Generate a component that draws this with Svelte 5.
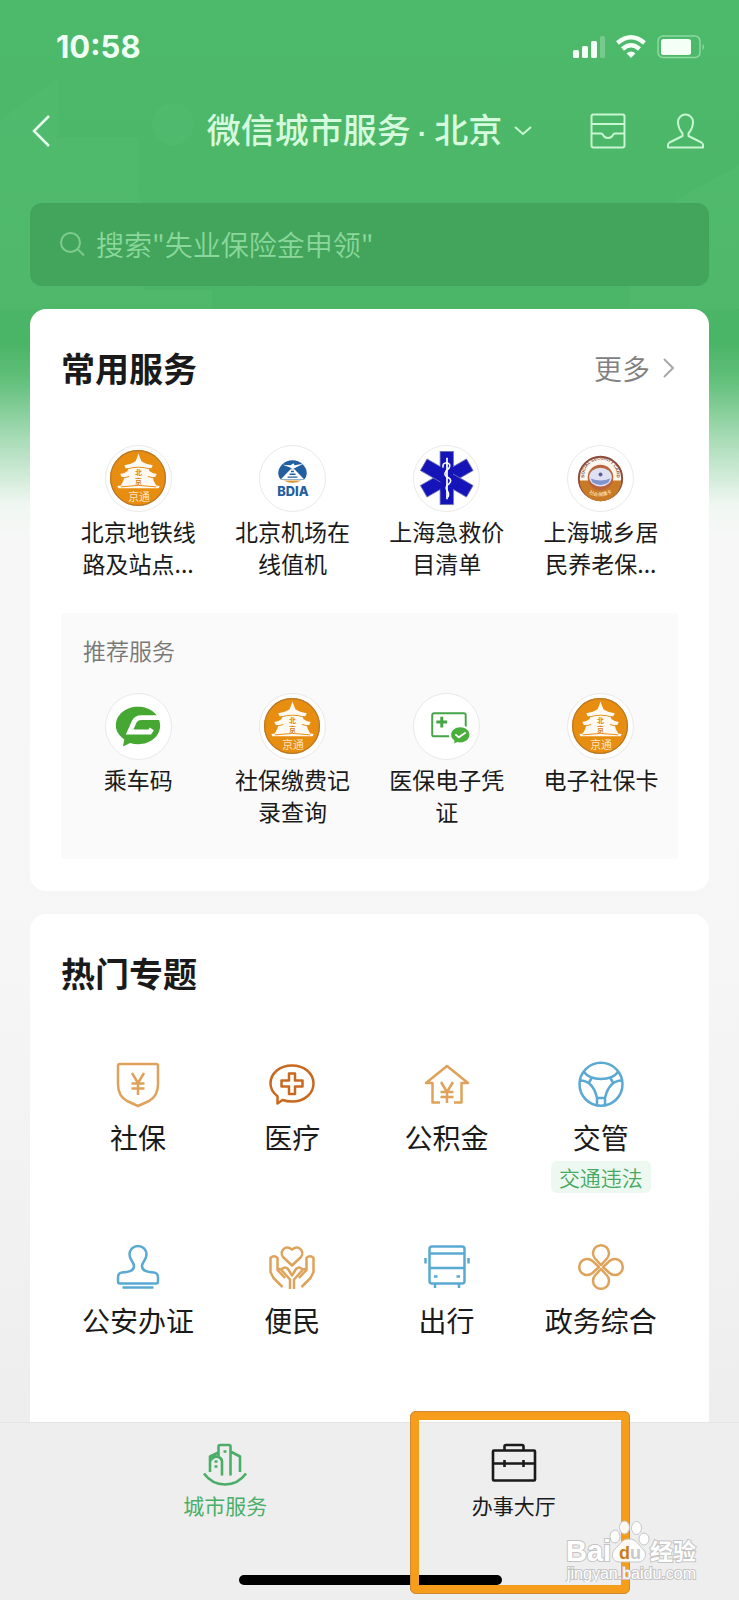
<script lang="ts">
  type Service = { name: string; icon: string };
  type Topic = { name: string; icon: string; tone: string; tag?: string };

  const common: Service[] = [
    { name: "北京地铁线路及站点...", icon: "pagoda" },
    { name: "北京机场在线值机", icon: "bdia" },
    { name: "上海急救价目清单", icon: "star" },
    { name: "上海城乡居民养老保...", icon: "card" },
  ];

  const recommended: Service[] = [
    { name: "乘车码", icon: "ride" },
    { name: "社保缴费记录查询", icon: "pagoda" },
    { name: "医保电子凭证", icon: "insurance" },
    { name: "电子社保卡", icon: "pagoda" },
  ];

  const topics: Topic[] = [
    { name: "社保", icon: "shield", tone: "gold" },
    { name: "医疗", icon: "medical", tone: "rust" },
    { name: "公积金", icon: "house", tone: "gold" },
    { name: "交管", icon: "wheel", tone: "blue", tag: "交通违法" },
    { name: "公安办证", icon: "stamp", tone: "blue" },
    { name: "便民", icon: "hands", tone: "gold" },
    { name: "出行", icon: "bus", tone: "blue" },
    { name: "政务综合", icon: "clover", tone: "gold" },
  ];

  let query = $state("");
</script>

{#snippet serviceIcon(icon: string)}
  <svg class="service-svg" viewBox="0 0 66 66" aria-hidden="true">
    {#if icon === "pagoda"}
      <circle cx="32.500" cy="32.500" r="28.5" fill="#e78d10" />
      <circle cx="32.500" cy="32.500" r="27.8" fill="none" stroke="#b9782a" stroke-width="1.2" />
      <path
        fill="#fffaf3"
        d="M33 7.500L34.500 12 36 15.500Q40 18.500 47.500 19.500L46 22.500H43.500L44 25.500Q47 28 51.500 28.500L50 31.500H47.500L48.500 35.500 51 40 54.500 40.500 53.500 43H12.500L11.500 40.500 15 40 17.500 35.500 18.500 31.500H16L14.500 28.500Q19 28 22 25.500L22.500 22.500H20L18.500 19.500Q26 18.500 30 15.500L31.500 12Z"
      />
      <path d="M21 23.500q12-4 24 0M17.500 32.500l6-1.500M48.500 32.500l-6-1.500M15 41.500q18-3 36 0" fill="none" stroke="#e78d10" stroke-width="1" />
      <text x="33" y="29" class="pg-mark" font-size="7">北</text>
      <text x="33" y="38.500" class="pg-mark" font-size="7">京</text>
      <text x="33.500" y="56" class="pg-name" font-size="11">京通</text>
    {:else if icon === "bdia"}
      <path d="M18.500 28a14.500 13.500 0 0 1 29 0q0 3.500-3 6.500h-23q-3-3-3-6.500z" fill="#225ea0" />
      <path d="M24 35h18q-4 2.500-9 2.500t-9-2.500z" fill="#d79a3d" />
      <path d="M23 19l8 .5 3-2 1 2 9-1.500-8 4-3 1.500-3-2z" fill="#fff" />
      <path d="M31 23.500h4l10 10.500h-24z" fill="#fff" />
      <path d="M31.500 26h3M30 28.700h6M28 31.600h10" stroke="#225ea0" stroke-width="1.500" />
      <text x="33.500" y="51" class="bdia" font-size="13">BDIA</text>
    {:else if icon === "star"}
      <g fill="#1414b8" stroke="#6f74b5" stroke-width=".8">
        <rect x="26.500" y="5.500" width="13.500" height="54" />
        <rect x="26.500" y="5.500" width="13.500" height="54" transform="rotate(60 33.250 32.500)" />
        <rect x="26.500" y="5.500" width="13.500" height="54" transform="rotate(120 33.250 32.500)" />
      </g>
      <path d="M26.900 20h12.700v26h-12.700z" fill="#1414b8" />
      <path d="M33.500 12v42" stroke="#dfe3fa" stroke-width="2" />
      <path
        d="M29.500 22q-1-5 4-5 4.500 1.500 2 5.500l-3 3q-3 4 2 6.500t1 6.500q-4.500 3-2 6.500t1 7"
        fill="none" stroke="#fff" stroke-width="1.600"
      />
    {:else if icon === "card"}
      <circle cx="33" cy="33" r="22" fill="#fdf6ed" stroke="#8c4c3c" stroke-width="2" />
      <path d="M12 35a21 21 0 0 0 42 0z" fill="#c97a24" />
      <circle cx="33" cy="32" r="13" fill="#b9643b" />
      <ellipse cx="33" cy="31.500" rx="11.500" ry="9.500" fill="#dfe0f4" />
      <path d="M23 33q10 4 20 0l-2 4q-8 5-16 0z" fill="#7f93cf" />
      <circle cx="33" cy="29" r="2" fill="#5d5d91" />
      <path id="ring-top" d="M17.500 36a16.500 16.500 0 1 1 31 0" fill="none" />
      <path id="ring-low" d="M16.500 42a19.500 19.500 0 0 0 33 0" fill="none" />
      <text font-size="4.500" class="ring"><textPath href="#ring-top" startOffset="50%">SOCIAL SECURITY CARD</textPath></text>
      <text font-size="5" class="ring low"><textPath href="#ring-low" startOffset="50%">社会保障卡</textPath></text>
    {:else if icon === "ride"}
      <path d="M32.500 13c12.800 0 22.500 8.300 22.500 19s-9.700 19-22.500 19q-4 0-8-1.200l-7.200 3.500 1.200-7.300c-5-3.500-8.500-8-8.500-14 0-10.700 9.700-19 22.500-19z" fill="#46a832" />
      <path d="M56 24h-20q-5.500 0-7.500 4.500l-4.500 10h20.500l2-3" fill="none" stroke="#fff" stroke-width="5" />
    {:else if icon === "insurance"}
      <rect x="18.500" y="19.500" width="34" height="23.500" rx="2" fill="none" stroke="#46a548" stroke-width="2" />
      <path d="M28.200 23v11M22.700 28.500h11" stroke="#46a548" stroke-width="3" />
      <ellipse cx="47" cy="41.500" rx="11.500" ry="10" fill="#fff" />
      <path d="M47 33.800c5.200 0 9.300 3.300 9.300 7.700s-4.100 7.700-9.300 7.700l-3-.4-3 1.500v-3c-2-1.500-3.300-3.300-3.300-5.800 0-4.400 4.100-7.700 9.300-7.700z" fill="#4aae3c" />
      <path d="M42 41l3.500 3 7-5" fill="none" stroke="#fff" stroke-width="1.800" />
    {/if}
  </svg>
{/snippet}

{#snippet topicIcon(icon: string, tone: string)}
  <svg class="line-icon {tone}" viewBox="0 0 48 48" aria-hidden="true">
    {#if icon === "shield"}
      <path d="M6 4h36q2 0 2 2v18q0 12-9 17l-11 5-11-5q-9-5-9-17v-18q0-2 2-2z" />
      <path d="M18 13l6 10 6-10M24 23v12M17.500 23.500h13M17.500 28.500h13" />
    {:else if icon === "medical"}
      <path d="M24 5.500c12.500 0 21.500 8 21.500 18s-9 18-21.500 18q-5 0-9.500-1.500l-5 3.500v-7.300c-4-3-7-7.200-7-12.700 0-10 9-18 21.500-18z" />
      <path d="M21 13.500h6v7h7.500v6h-7.500v7.500h-6v-7.500h-7.500v-6h7.500z" />
    {:else if icon === "house"}
      <path d="M17 42.500h-7.500v-19.500h-6.500l21-17 21 17h-6.500v19.500h-7.500" />
      <path d="M18 22l6 10 6-10M24 32v11M17.500 32h13M17.500 37h13" />
    {:else if icon === "wheel"}
      <circle cx="24" cy="24.300" r="21.500" />
      <path d="M7 12q5 7 17 7t17-7M3 20.500q13 0 17 17.500v7.500M45 20.500q-13 0-17 17.500v7.500" />
      <path d="M15 17.500l-3 5M33 17.500l3 5M20 38h8" />
    {:else if icon === "stamp"}
      <path d="M20 23c0-4-4.500-6-4.500-11.500a8.500 8.500 0 0 1 17 0c0 5.500-4.500 7.500-4.500 11.500 0 5 5 6 12 6.500q4 .5 4 5v4q0 2-2 2h-36q-2 0-2-2v-4q0-4.500 4-5c7-.5 12-1.500 12-6.500z" />
      <path d="M8.500 44.500h31" />
    {:else if icon === "hands"}
      <path d="M24 22.500l-9-8.500c-4-5 2-13 9-7.500 7-5.500 13 2.500 9 7.500z" />
      <path d="M22 46v-9.500l-9-10q-3-1.500-3.500 2M9.500 27v-12q-3.500-3.500-7 0v14l3 6 9 9M9.500 27l7.500 8M14 26q3-3 6 0l4 6.500 4-6.500q3-3 6 0M26 46v-9.500l9-10q3-1.500 3.500 2M38.500 27v-12q3.500-3.500 7 0v14l-3 6-9 9M38.500 27l-7.500 8" />
    {:else if icon === "bus"}
      <rect x="6.500" y="3.500" width="35" height="37" rx="2.500" />
      <path d="M6.500 10.500h35M6.500 25h35M2.500 15v5.500M45.500 15v5.500M12 41v4M36 41v4M11 33.500h3.500M33.500 33.500h3.500" />
    {:else if icon === "clover"}
      <path d="M24 22l-6-6.500a8 8 0 1 1 12 0zM24 26l-6 6.500a8 8 0 1 0 12 0zM22 24l-6.500-6a8 8 0 1 0 0 12zM26 24l6.500-6a8 8 0 1 1 0 12z" />
    {/if}
  </svg>
{/snippet}

{#snippet serviceGrid(items: Service[])}
  <div class="grid">
    {#each items as item}
      <a class="service" href="#service">
        <span class="disc">{@render serviceIcon(item.icon)}</span>
        <span class="service-name">{item.name}</span>
      </a>
    {/each}
  </div>
{/snippet}

<div class="page">
  <!-- faint skyline behind the header -->
  <svg class="skyline" viewBox="0 0 739 309" preserveAspectRatio="xMidYMin slice" aria-hidden="true">
    <path d="M0 120L58 78v231H0zM54 138h84v171h-84zM98 170l44 30v109h-44z" />
    <circle cx="173" cy="124" r="21" />
    <path d="M630 215h50v94h-50zM676 200l63-35v144h-63zM120 290h92v19h-92z" />
  </svg>

  <header>
    <div class="status">
      <span class="time">10:58</span>
      <svg width="134" height="26" viewBox="0 0 134 26" aria-hidden="true">
        <g fill="#f4fff6">
          <rect x="1" y="16" width="6" height="8" rx="1.500" />
          <rect x="10" y="12" width="6" height="12" rx="1.500" />
          <rect x="19" y="7" width="6" height="17" rx="1.500" />
          <rect x="28" y="2" width="5" height="22" rx="1.500" opacity=".25" />
          <path d="M59 24l-4.500-4.700q4.500-3.600 9 0z" />
          <rect x="89" y="5" width="30" height="16" rx="2.500" />
        </g>
        <path d="M45.500 9q13.500-11.500 27 0M50.500 15q8.500-7.500 17 0" fill="none" stroke="#f4fff6" stroke-width="4.500" />
        <rect x="86" y="2" width="42" height="21.500" rx="5" fill="none" stroke="#8fd9a3" stroke-width="1.500" />
        <path d="M130.500 9.500q3 3.500 0 7z" fill="#8fd9a3" />
      </svg>
    </div>

    <div class="nav">
      <button class="icon-btn" aria-label="返回">
        <svg width="22" height="34" viewBox="0 0 22 34" fill="none" stroke="#e9fff0" stroke-width="2.500">
          <path d="M19 2L4 17l15 15" />
        </svg>
      </button>
      <button class="city">
        <span>微信城市服务<span class="dot">·</span>北京</span>
        <svg width="18" height="12" viewBox="0 0 18 12" fill="none" stroke="#c8f5d2" stroke-width="2">
          <path d="M1 2l8 7 8-7" />
        </svg>
      </button>
      <div class="tools">
        <button class="icon-btn" aria-label="卡包">
          <svg width="38" height="38" viewBox="0 0 38 38" fill="none" stroke="#c8f5d2" stroke-width="2">
            <rect x="2.500" y="2.500" width="33" height="33" rx="2" />
            <path d="M2.500 12h33M2.500 21.500h9.500q1.500 0 2 1.500 1.500 3 5 3t5-3q.5-1.500 2-1.500h9.500" />
          </svg>
        </button>
        <button class="icon-btn" aria-label="我的">
          <svg width="38" height="38" viewBox="0 0 38 38" fill="none" stroke="#c8f5d2" stroke-width="2" stroke-linejoin="round">
            <path d="M15.500 21.500C13 18.500 11 14.500 11 10a7.500 7.500 0 0 1 15 0c0 4.500-2 8.500-4.500 11.500v2.500l13 6.500q1.500 1 1.500 2.500v2.500H1v-2.500q0-1.500 1.500-2.500l13-6.500z" />
          </svg>
        </button>
      </div>
    </div>

    <label class="search">
      <svg width="26" height="26" viewBox="0 0 26 26" fill="none" stroke="#7dcb8f" stroke-width="2">
        <circle cx="10.500" cy="11.500" r="9.500" />
        <path d="M18 18.500l6 6" />
      </svg>
      <input type="search" aria-label="搜索服务" placeholder={'搜索"失业保险金申领"'} bind:value={query} />
    </label>
  </header>

  <main>
    <section class="panel">
      <div class="panel-head">
        <h2>常用服务</h2>
        <a class="more" href="#more">
          更多
          <svg width="14" height="22" viewBox="0 0 14 22" fill="none" stroke="#a8a8a8" stroke-width="2">
            <path d="M2 2l9 9-9 9" />
          </svg>
        </a>
      </div>
      <div class="common">{@render serviceGrid(common)}</div>
      <div class="recommend">
        <h3>推荐服务</h3>
        {@render serviceGrid(recommended)}
      </div>
    </section>

    <section class="panel topics">
      <div class="panel-head"><h2>热门专题</h2></div>
      <div class="grid topic-grid">
        {#each topics as topic}
          <a class="topic" href="#topic">
            {@render topicIcon(topic.icon, topic.tone)}
            <span class="topic-name">{topic.name}</span>
            {#if topic.tag}<span class="tag">{topic.tag}</span>{/if}
          </a>
        {/each}
      </div>
    </section>
  </main>

  <nav class="tabbar">
    <a class="tab active" href="#city">
      <svg class="line-icon tab-icon" viewBox="0 0 48 48" aria-hidden="true">
        <path d="M3 33.500q8 11 21 11t21-11" />
        <path d="M9 32v-15.500l8.500-4M21 35.500v-14q0-3-3.500-4.500-3-1-5 0.500t-3.500 3.500M17.500 16v-9.500q0-1.500 1.500-1.500h9q1.500 0 1.500 1.500v29M29.500 11.500l9.500 5v15.500" />
        <path d="M22.500 11.500h3M13.500 21.500h3M13.500 26.500h3" />
      </svg>
      <span>城市服务</span>
    </a>
    <a class="tab" href="#hall">
      <svg class="line-icon tab-icon" viewBox="0 0 48 48" aria-hidden="true">
        <rect x="3" y="10.500" width="42" height="30" rx="1" />
        <path d="M14.500 10.500v-4q0-1.500 1.500-1.500h16q1.500 0 1.500 1.500v4M3 23.500h42M14.500 20v7M33.500 20v7" />
      </svg>
      <span>办事大厅</span>
      <span class="marker"></span>
    </a>
    <div class="home-bar"></div>
    <svg class="watermark" width="140" height="64" viewBox="0 0 140 64" aria-label="Baidu 经验">
      <g class="stamp-shape">
        <ellipse cx="52" cy="18.500" rx="5" ry="6.500" />
        <ellipse cx="61.500" cy="9.500" rx="5" ry="6.500" />
        <ellipse cx="73.500" cy="10" rx="5" ry="6.500" />
        <ellipse cx="81" cy="21" rx="5" ry="6" />
        <path d="M66 21c8 0 9 6 14 10 5 5 2 13-5 13h-18c-8 0-10-8-5-13 5-4 6-10 14-10z" />
      </g>
      <text x="3" y="43" font-size="29" class="wm bold">Bai</text>
      <text x="56" y="41" font-size="18" class="wm-du">d<tspan fill="#c9c9c9">u</tspan></text>
      <text x="87" y="42" font-size="23" class="wm bold">经验</text>
      <text x="4" y="61" font-size="16" class="wm">jingyan.baidu.com</text>
    </svg>
  </nav>
</div>

<style>
  :global(body) { margin: 0; }

  .page {
    position: relative;
    display: flex; flex-direction: column;
    min-height: 100vh;
    font-family: "Noto Sans CJK SC", "Liberation Sans", sans-serif;
    color: #1a1a1a;
    background: linear-gradient(180deg, #4db96b 0, #4bb567 345px, #62c07b 380px, #a9dcb7 440px, #f0f7f2 505px, #f7f7f7 540px, #f6f6f6 950px, #eeeeee 1400px);
  }
  .page * { box-sizing: border-box; }

  .skyline { position: absolute; top: 0; left: 0; width: 100%; height: 309px; fill: #6bd08c; opacity: .1; }

  header { position: relative; padding: 0 30px; }

  .status { display: flex; align-items: center; justify-content: space-between; height: 94px; padding: 0 3px 0 26px; }
  .time { font: 700 31px/36px Inter, sans-serif; color: #f0fff3; }

  button { display: flex; align-items: center; padding: 0; border: none; background: none; font-family: inherit; cursor: pointer; }
  a { color: inherit; text-decoration: none; }

  .nav { display: grid; grid-template-columns: 1fr auto 1fr; align-items: center; height: 74px; }
  .city { gap: 12px; font-size: 34px; line-height: 48px; font-weight: 500; color: #d5fadd; }
  .dot { padding: 0 7px; font-family: "Liberation Sans", sans-serif; font-size: 28px; font-weight: 700; }
  .tools { display: flex; justify-content: flex-end; gap: 40px; padding-right: 4px; }

  .search {
    display: flex; align-items: center; gap: 10px;
    height: 83px; margin-top: 35px; padding: 0 28px 2px 30px;
    border-radius: 12px; background: #42a55b;
  }
  .search input {
    flex: 1; min-width: 0; padding: 0; border: none; outline: none; background: none;
    font: 350 28px/40px "Noto Sans CJK SC", sans-serif; color: #d5fadd;
  }
  .search input::placeholder { color: #8bd79c; opacity: 1; }

  main { position: relative; flex: 1; display: flex; flex-direction: column; gap: 23px; padding: 23px 30px 0; }

  .panel { padding: 35px 31px 32px; border-radius: 16px; background: #fff; }
  .panel-head { display: flex; align-items: center; justify-content: space-between; }
  h2 { margin: 0; font-size: 34px; line-height: 48px; font-weight: 700; }
  h3 { margin: 0 0 27px; padding: 0 22px; font-size: 23px; line-height: 32px; font-weight: 350; color: #777; }
  .more { display: flex; align-items: center; gap: 12px; padding-right: 2px; font-size: 28px; line-height: 40px; font-weight: 350; color: #808080; }

  .grid { display: grid; grid-template-columns: repeat(4, 1fr); }
  .common { margin: 53px 0 34px; }
  .recommend { padding: 21px 0 32px; border-radius: 4px; background: #fafafa; }

  .service { display: flex; flex-direction: column; align-items: center; gap: 3px; }
  .disc { width: 67px; height: 67px; border: 1px solid #e9e9e9; border-radius: 50%; background: #fff; }
  .service-svg { display: block; width: 100%; height: 100%; }
  .service-name { width: 116px; font-size: 23px; line-height: 32px; text-align: center; }

  .pg-mark { fill: #d9820d; font-weight: 700; text-anchor: middle; }
  .pg-name { fill: #fde6c4; text-anchor: middle; }
  .bdia { fill: #225ea0; font-family: Inter, sans-serif; font-weight: 800; text-anchor: middle; }
  .ring { fill: #8c4c3c; font-family: "Liberation Sans", sans-serif; font-weight: 700; text-anchor: middle; }
  .ring.low { fill: #f3cf9a; }

  .topics { flex: 1; border-radius: 16px 16px 0 0; }
  .topic-grid { margin-top: 63px; row-gap: 50px; }
  .topic { display: flex; flex-direction: column; align-items: center; }
  .topic-name { margin-top: 9px; font-size: 28px; line-height: 40px; }
  .tag { margin-top: 4px; padding: 0 8px; border-radius: 6px; font-size: 21px; line-height: 32px; font-weight: 350; color: #46a862; background: #edf9f0; }

  .line-icon { display: block; width: 48px; height: 48px; fill: none; stroke: currentColor; stroke-width: 2.5; stroke-linejoin: round; }
  .gold { color: #dfa25a; }
  .rust { color: #c9691f; }
  .blue { color: #5aa9d2; }

  .tabbar {
    position: relative;
    display: flex; height: 178px; padding: 0 81px;
    border-top: 1px solid #e4e4e4; background: #eeeeee;
  }
  .tab { position: relative; flex: 1; display: flex; flex-direction: column; align-items: center; gap: 2px; padding-top: 17px; font-size: 21px; line-height: 30px; }
  .tab.active { color: #4bae68; }
  .tab-icon { stroke-width: 2.6; }

  .home-bar { position: absolute; bottom: 15px; left: 50%; width: 263px; height: 10px; margin-left: -131px; border-radius: 5px; background: #000; }
  .marker { position: absolute; z-index: 1; top: -12px; left: 40px; right: 28px; height: 183px; border: 9px solid #f79d1c; border-radius: 6px; outline: 1px solid #cf8a32; outline-offset: -1px; }

  .watermark { position: absolute; z-index: 2; right: 36px; bottom: 18px; }
  .stamp-shape { fill: #fff; stroke: #c4c4c4; stroke-width: 1; opacity: .92; }
  .wm { fill: #fff; stroke: #c4c4c4; stroke-width: 2; paint-order: stroke; font-family: "Liberation Sans", "Noto Sans CJK SC", sans-serif; }
  .wm.bold { font-weight: 700; }
  .wm-du { fill: #c77f1c; font-family: "Liberation Sans", sans-serif; font-weight: 700; }
</style>
